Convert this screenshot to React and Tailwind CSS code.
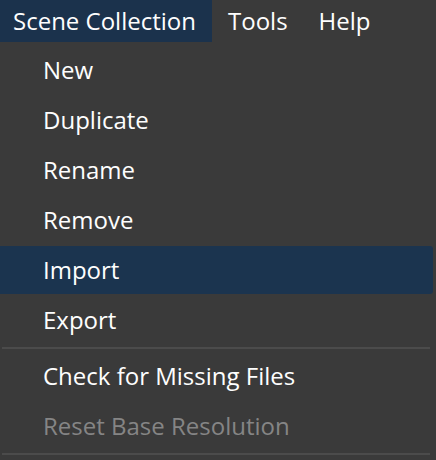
const items = [
  { label: "New" },
  { label: "Duplicate" },
  { label: "Rename" },
  { label: "Remove" },
  { label: "Import", active: true },
  { label: "Export" },
  { sep: true },
  { label: "Check for Missing Files" },
  { label: "Reset Base Resolution", disabled: true },
  { sep: true },
];

export default function App() {
  return (
    <div
      className="h-[460px] w-[436px] overflow-hidden bg-[#3a3a3a] text-[24px] leading-none text-[#fefefe]"
      style={{ fontFamily: '"Open Sans", "Noto Sans", sans-serif' }}
    >
      <div className="flex h-[42px] items-center">
        <div className="flex h-full w-[212px] items-center bg-[#1b324c] pl-[13px]">
          Scene Collection
        </div>
        <div className="pl-[16px] pr-[15px]">Tools</div>
        <div className="px-[16px]">Help</div>
      </div>
      <div className="flex flex-col pt-[3px]">
        {items.map((it, i) =>
          it.sep ? (
            <div key={i} className="mx-[2px] my-[2px] h-[2px] w-[428px] bg-[#4b4b4b]" />
          ) : (
            <div
              key={i}
              className={
                "my-px flex h-[48px] w-[433px] items-center rounded-r-[3px] pl-[43px] " +
                (it.active ? "bg-[#1b344f] " : "") +
                (it.disabled ? "text-[#858585]" : "")
              }
            >
              {it.label}
            </div>
          )
        )}
      </div>
    </div>
  );
}
